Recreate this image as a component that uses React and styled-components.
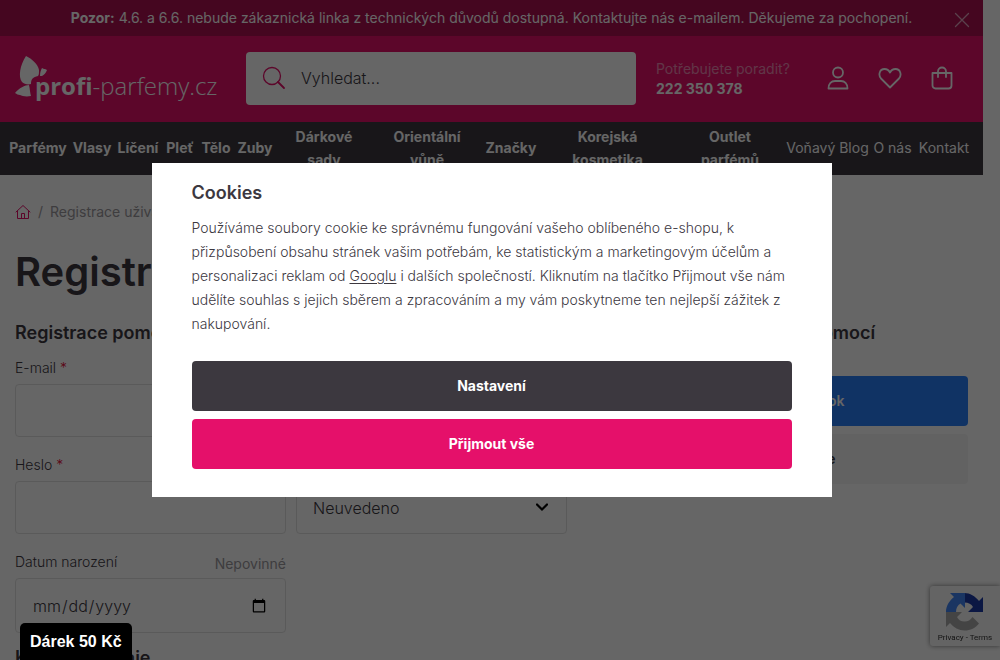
import React from "react";
import styled, { createGlobalStyle, css } from "styled-components";

const GlobalStyle = createGlobalStyle`
  *, *::before, *::after { box-sizing: border-box; }
  body {
    margin: 0;
    overflow: hidden;
    background: #fff;
    color: #3c383f;
    font-family: Inter, "Noto Sans", sans-serif;
    font-size: 14px;
    line-height: 20px;
  }
  h1, h2, p, ul { margin: 0; padding: 0; }
  button, input, select { font: inherit; color: inherit; }
  a { color: inherit; text-decoration: none; }
`;

const Page = styled.div`
  padding-right: 17px;
`;

const Notice = styled.div`
  display: flex;
  align-items: center;
  height: 36px;
  padding: 0 13px 0 29px;
  background: #ad1150;
  color: #fff;
`;

const NoticeText = styled.p`
  flex: 1;
  text-align: center;
  white-space: nowrap;
`;

const PlainButton = styled.button`
  display: flex;
  padding: 0;
  border: 0;
  background: none;
  cursor: pointer;
`;

const CloseButton = styled(PlainButton)`
  padding-top: 4px;
  color: #e0a6bf;
`;

const Header = styled.header`
  display: flex;
  align-items: center;
  height: 86px;
  padding: 0 29px 2px 15px;
  background: #e5106a;
  color: #fff;
`;

const Logo = styled.a`
  display: flex;
  align-items: flex-end;
  width: 231px;
  flex: none;
`;

const LogoName = styled.span`
  margin-left: -12px;
  font-family: "Open Sans", sans-serif;
  font-size: 24px;
  line-height: 28px;
  font-weight: 300;
  white-space: nowrap;

  b { font-weight: 700; }
`;

const Search = styled.form`
  display: flex;
  align-items: center;
  flex: 1;
  height: 53px;
  padding-left: 16px;
  gap: 15px;
  border-radius: 4px;
  background: #fff;
  color: #e5106a;
`;

const SearchInput = styled.input`
  flex: 1;
  min-width: 0;
  padding: 0;
  border: 0;
  outline: 0;
  background: none;
  font-size: 16px;
  font-weight: 300;

  &::placeholder { color: #3c383f; opacity: 1; }
`;

const Help = styled.div`
  width: 170px;
  margin-left: 20px;
  padding-top: 2px;
  white-space: nowrap;
`;

const HelpQuestion = styled.p`
  color: rgba(255, 255, 255, 0.5);
`;

const HelpPhone = styled.a`
  font-weight: 700;
`;

const HeaderIcons = styled.div`
  display: flex;
  gap: 28px;
`;

const Nav = styled.nav`
  display: grid;
  grid-template-columns: 56fr 36fr 40fr 28fr 28fr 34fr 88fr 102fr 50fr 127fr 102fr 77fr 37fr 50fr;
  gap: 8px;
  align-items: center;
  height: 53px;
  padding: 0 14px 2px 10px;
  background: #3c383f;
  color: #fff;
  line-height: 23px;
`;

const NavLink = styled.a`
  display: flex;
  justify-content: center;
  min-width: 0;
  text-align: center;
  font-weight: ${(p) => (p.$light ? 400 : 700)};
  white-space: nowrap;
`;

const Main = styled.main`
  padding: 27px 15px 0;
`;

const Breadcrumb = styled.nav`
  display: flex;
  align-items: center;
  gap: 7px;
  height: 20px;
  color: #9b989d;
`;

const HomeLink = styled.a`
  display: flex;
  color: #e5106a;
`;

const Title = styled.h1`
  margin-top: 26px;
  font-size: 40px;
  line-height: 48px;
  font-weight: 600;
`;

const Columns = styled.div`
  display: flex;
  justify-content: space-between;
  gap: 88px;
  margin-top: 25px;
`;

const FormColumn = styled.form`
  flex: 552;
  min-width: 0;
`;

const SocialColumn = styled.section`
  flex: 313;
  min-width: 0;
`;

const SectionTitle = styled.h2`
  font-size: 18px;
  line-height: 24px;
  font-weight: 600;
  white-space: nowrap;
`;

const Fields = styled.div`
  display: grid;
  grid-template-columns: 1fr 1fr;
  gap: 18px 10px;
  margin: 13px 0;
`;

const Field = styled.div`
  min-width: 0;
`;

const LabelRow = styled.div`
  display: flex;
  justify-content: space-between;
  height: 26px;
`;

const Label = styled.label`
  font-weight: 300;
`;

const Required = styled.span`
  color: #e5103a;
`;

const Optional = styled.span`
  padding-top: 2px;
  color: #9b989d;
`;

const control = css`
  display: block;
  width: 100%;
  height: 53px;
  padding: 0 16px;
  border: 1px solid #e0e0e0;
  border-radius: 4px;
  background: #fff;
  font-size: 16px;
  font-weight: 300;
`;

const Input = styled.input`
  ${control}
  height: ${(p) => (p.type === "date" ? 55 : 53)}px;
`;

const SelectBox = styled.div`
  position: relative;

  svg {
    position: absolute;
    top: 22px;
    right: 19px;
    pointer-events: none;
  }
`;

const Select = styled.select`
  ${control}
  appearance: none;
`;

const SocialButtons = styled.div`
  display: grid;
  gap: 8px;
  margin-top: 31px;
`;

const SocialButton = styled.button`
  height: 50px;
  border: 0;
  border-radius: 4px;
  background: ${(p) => (p.$facebook ? "#2a80fa" : "#f5f5f5")};
  color: ${(p) => (p.$facebook ? "#fff" : "#3c383f")};
  font-weight: 600;
`;

const Captcha = styled.aside`
  position: fixed;
  right: 0;
  bottom: 14px;
  display: flex;
  flex-direction: column;
  align-items: center;
  width: 70px;
  height: 60px;
  padding-top: 6px;
  border-radius: 3px 0 0 3px;
  background: #f9f9f9;
  box-shadow: 0 0 5px #808080;
  color: #333;
  font-family: Roboto, sans-serif;
  font-size: 8px;
  line-height: 12px;
  white-space: nowrap;
`;

const Overlay = styled.div`
  position: fixed;
  inset: 0;
  display: flex;
  align-items: center;
  justify-content: center;
  padding-right: 17px;
  background: rgba(0, 0, 0, 0.6);
`;

const Dialog = styled.section`
  width: 680px;
  max-width: 100%;
  padding: 18px 40px 28px;
  background: #fff;
`;

const DialogText = styled.p`
  margin: 11px 0 25px;
  line-height: 24px;
  font-weight: 300;

  a { text-decoration: underline; text-underline-offset: 2px; }
`;

const DialogActions = styled.div`
  display: grid;
  gap: 8px;
`;

const DialogButton = styled.button`
  height: 50px;
  border: 0;
  border-radius: 4px;
  background: ${(p) => (p.$primary ? "#e5106a" : "#3c383f")};
  color: #fff;
  font-weight: 700;
`;

const Gift = styled.button`
  position: fixed;
  left: 20px;
  bottom: 0;
  height: 37px;
  padding: 0 10px;
  border: 0;
  border-radius: 5px 5px 0 0;
  background: #000;
  color: #fff;
  font-family: "Liberation Sans", Arial, sans-serif;
  font-size: 16px;
  font-weight: 700;
`;

const Stroke = ({ size = 24, width = 2, children }) => (
  <svg
    width={size}
    height={size}
    viewBox={`0 0 ${size} ${size}`}
    fill="none"
    stroke="currentColor"
    strokeWidth={width}
    strokeLinecap="round"
    strokeLinejoin="round"
    aria-hidden="true"
  >
    {children}
  </svg>
);

const LogoMark = () => (
  <svg width="32" height="44" viewBox="0 0 32 44" fill="currentColor" aria-hidden="true">
    <path d="M11 0C17 3 23 8 24 14c0 3 0 5-1 6-5 1-7 3-7 8-3 1-7 0-9-2C3 21 5 9 11 0Z" />
    <path d="M0 37c4-5 10-8 14-8 1 4 1 8 2 11-5 1-9 0-11-1-2 0-3-1-5-2Z" />
    <path d="M25 20c0-4 1-6 2-8l2 1 1 0 2 1c-1 3-3 5-5 6Z" />
  </svg>
);

const icons = {
  user: (
    <>
      <circle cx="12" cy="6.5" r="5" />
      <path d="M2.5 22.5c0-5 3-7.5 6.5-7.5h6c3.5 0 6.500 2.500 6.500 7.500Z" />
    </>
  ),
  heart: (
    <path d="M12 21.5L3 12.5C0 9 1.500 3 6.500 3c2.500 0 4.500 1.500 5.500 3.500C13 4.500 15 3 17.500 3c5 0 6.500 6 3.500 9.500Z" />
  ),
  bag: (
    <>
      <path d="M2.500 7h19v12.500a3 3 0 0 1-3 3h-13a3 3 0 0 1-3-3Z" />
      <path d="M8 11V5.500a4 4 0 0 1 8 0V11" />
    </>
  ),
};

const headerActions = [
  ["user", "Účet"],
  ["heart", "Oblíbené"],
  ["bag", "Košík"],
];

const categories = [
  ["Parfémy"],
  ["Vlasy"],
  ["Líčení"],
  ["Pleť"],
  ["Tělo"],
  ["Zuby"],
  ["Dárkové", "sady"],
  ["Orientální", "vůně"],
  ["Značky"],
  ["Korejská", "kosmetika"],
  ["Outlet", "parfémů"],
];

const pages = ["Voňavý Blog", "O nás", "Kontakt"];

export default function App() {
  return (
    <>
      <GlobalStyle />
      <Page>
        <Notice>
          <NoticeText>
            <b>Pozor:</b> 4.6. a 6.6. nebude zákaznická linka z technických důvodů dostupná.
            Kontaktujte nás e-mailem. Děkujeme za pochopení.
          </NoticeText>
          <CloseButton type="button" aria-label="Zavřít">
            <Stroke size={16} width={1.3}>
              <path d="M1.5 1.5l13 13M14.5 1.5l-13 13" />
            </Stroke>
          </CloseButton>
        </Notice>
        <Header>
          <Logo href="#" aria-label="profi-parfemy.cz">
            <LogoMark />
            <LogoName>
              <b>profi</b>-parfemy.cz
            </LogoName>
          </Logo>
          <Search>
            <Stroke size={24} width={1.3}>
              <circle cx="10" cy="10" r="8.5" />
              <path d="M16 16l6 6" strokeWidth="1.8" />
            </Stroke>
            <SearchInput type="search" placeholder="Vyhledat..." aria-label="Vyhledat" />
          </Search>
          <Help>
            <HelpQuestion>Potřebujete poradit?</HelpQuestion>
            <HelpPhone href="tel:222350378">222 350 378</HelpPhone>
          </Help>
          <HeaderIcons>
            {headerActions.map(([name, label]) => (
              <PlainButton key={name} type="button" aria-label={label}>
                <Stroke width={1.8}>{icons[name]}</Stroke>
              </PlainButton>
            ))}
          </HeaderIcons>
        </Header>
        <Nav>
          {categories.map((lines) => (
            <NavLink key={lines[0]} href="#">
              <span>
                {lines[0]}
                {lines[1] && (
                  <>
                    <br />
                    {lines[1]}
                  </>
                )}
              </span>
            </NavLink>
          ))}
          {pages.map((name) => (
            <NavLink key={name} href="#" $light>
              {name}
            </NavLink>
          ))}
        </Nav>
        <Main>
          <Breadcrumb>
            <HomeLink href="#" aria-label="Domů">
              <Stroke size={16} width={1}>
                <path d="M1 8l7-6.500L15 8M2.500 7v7.500h11V7M6.500 14.500V9.500h3v5" />
              </Stroke>
            </HomeLink>
            <span>/</span>
            <span>Registrace uživatele</span>
          </Breadcrumb>
          <Title>Registrace</Title>
          <Columns>
            <FormColumn>
              <SectionTitle>Registrace pomocí e-mailu</SectionTitle>
              <Fields>
                <Field>
                  <LabelRow>
                    <Label htmlFor="email">
                      E-mail <Required>*</Required>
                    </Label>
                  </LabelRow>
                  <Input id="email" type="email" />
                </Field>
                <Field>
                  <LabelRow>
                    <Label htmlFor="phone">Telefon</Label>
                  </LabelRow>
                  <Input id="phone" type="tel" />
                </Field>
                <Field>
                  <LabelRow>
                    <Label htmlFor="password">
                      Heslo <Required>*</Required>
                    </Label>
                  </LabelRow>
                  <Input id="password" type="password" />
                </Field>
                <Field>
                  <LabelRow>
                    <Label htmlFor="gender">Pohlaví</Label>
                  </LabelRow>
                  <SelectBox>
                    <Select id="gender" defaultValue="none">
                      <option value="none">Neuvedeno</option>
                      <option value="f">Žena</option>
                      <option value="m">Muž</option>
                    </Select>
                    <svg width="12" height="9" viewBox="0 0 12 9" fill="none" stroke="#000" strokeWidth="2.2" aria-hidden="true">
                      <path d="M1 1.5l5 5 5-5" strokeLinecap="round" />
                    </svg>
                  </SelectBox>
                </Field>
                <Field>
                  <LabelRow>
                    <Label htmlFor="birth">Datum narození</Label>
                    <Optional>Nepovinné</Optional>
                  </LabelRow>
                  <Input id="birth" type="date" />
                </Field>
              </Fields>
              <SectionTitle>Kontaktní údaje</SectionTitle>
            </FormColumn>
            <SocialColumn>
              <SectionTitle>Rychlá registrace pomocí</SectionTitle>
              <SocialButtons>
                <SocialButton type="button" $facebook>
                  Facebook
                </SocialButton>
                <SocialButton type="button">Google</SocialButton>
              </SocialButtons>
            </SocialColumn>
          </Columns>
        </Main>
      </Page>
      <Captcha>
        <svg width="40" height="40" viewBox="0 0 40 40" aria-hidden="true">
          <path fill="#1c3aa9" d="M38 20V5l-4 4C30 4 25 1 19.500 1v9.500c4 0 7 1.500 8.500 4.500l-5 5Z" />
          <path fill="#4285f4" d="M20 1H5l4 4C4 9 1 14 1 20h10c0-4 1.500-6.500 4.500-8.500l4.500 4.500Z" />
          <path fill="#ababab" d="M1 20v15l4-4c3.500 4.500 9 7.500 14.500 7.500 6 0 11-2.500 14.500-7l-6.500-6.500c-2 3-4.500 4.500-8 4.500-3.500 0-6-1.500-7.500-4.500l5-5Z" />
        </svg>
        <span>
          <a href="#">Privacy</a> - <a href="#">Terms</a>
        </span>
      </Captcha>
      <Overlay>
        <Dialog role="dialog" aria-modal="true" aria-labelledby="cookies-title">
          <SectionTitle id="cookies-title">Cookies</SectionTitle>
          <DialogText>
            Používáme soubory cookie ke správnému fungování vašeho oblíbeného e-shopu, k
            <br />
            přizpůsobení obsahu stránek vašim potřebám, ke statistickým a marketingovým účelům a
            <br />
            personalizaci reklam od <a href="#">Googlu</a> i dalších společností. Kliknutím na
            tlačítko Přijmout vše nám
            <br />
            udělíte souhlas s jejich sběrem a zpracováním a my vám poskytneme ten nejlepší zážitek z
            <br />
            nakupování.
          </DialogText>
          <DialogActions>
            <DialogButton type="button">Nastavení</DialogButton>
            <DialogButton type="button" $primary>
              Přijmout vše
            </DialogButton>
          </DialogActions>
        </Dialog>
      </Overlay>
      <Gift type="button">Dárek 50 Kč</Gift>
    </>
  );
}
